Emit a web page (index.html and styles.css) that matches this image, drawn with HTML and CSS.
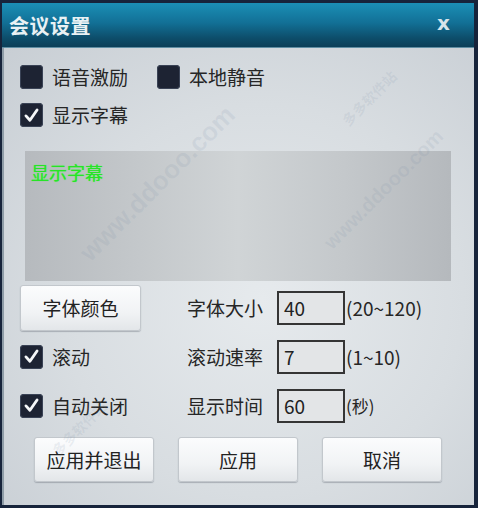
FILE: index.html
```html
<!DOCTYPE html>
<html lang="zh-CN">
<head>
    <meta charset="UTF-8">
    <title>会议设置</title>
    <link rel="stylesheet" href="styles.css">
</head>
<body>
    <div class="window">
        <div class="titlebar">
            <span class="title">会议设置</span>
            <span class="close">x</span>
        </div>

        <div class="content">
            <div class="checks">
                <label class="check"><span class="box"></span>语音激励</label>
                <label class="check"><span class="box"></span>本地静音</label>
            </div>
            <div class="checks">
                <label class="check"><span class="box on"><svg viewBox="0 0 24 24"><path d="M5 12.5 L10 18 L19 5" /></svg></span>显示字幕</label>
            </div>

            <div class="preview">
                <span class="preview-text">显示字幕</span>
            </div>

            <div class="grid">
                <div class="cell-first"><button class="btn btn-color">字体颜色</button></div>
                <span class="label">字体大小</span>
                <div class="input">40</div>
                <span class="hint">(20~120)</span>

                <div class="cell-first"><label class="check"><span class="box on"><svg viewBox="0 0 24 24"><path d="M5 12.5 L10 18 L19 5" /></svg></span>滚动</label></div>
                <span class="label">滚动速率</span>
                <div class="input">7</div>
                <span class="hint">(1~10)</span>

                <div class="cell-first"><label class="check"><span class="box on"><svg viewBox="0 0 24 24"><path d="M5 12.5 L10 18 L19 5" /></svg></span>自动关闭</label></div>
                <span class="label">显示时间</span>
                <div class="input">60</div>
                <span class="hint small">(秒)</span>
            </div>

            <div class="actions">
                <button class="btn">应用并退出</button>
                <button class="btn">应用</button>
                <button class="btn">取消</button>
            </div>

            <!-- site watermarks -->
            <span class="mark m1">www.ddooo.com</span>
            <span class="mark m2">www.ddooo.com</span>
            <span class="mark cn m3">多多软件站</span>
            <span class="mark cn m4">多多软件站</span>
        </div>
    </div>
</body>
</html>
```

FILE: styles.css
```css
body {
    margin: 0;
    background: #1a2942;
    font-family: "Noto Sans CJK SC", "Microsoft YaHei", sans-serif;
    color: #232323;
}

.window {
    width: 478px;
    height: 508px;
    box-sizing: border-box;
    padding: 3px 4px 3px 2px;
    background: #17243b;
    display: flex;
    flex-direction: column;
}

.titlebar {
    height: 44px;
    flex-shrink: 0;
    display: flex;
    align-items: center;
    justify-content: space-between;
    padding: 0 24px 0 7px;
    background: linear-gradient(to bottom, #1b8fb6 0%, #127096 45%, #0d4d6a 80%, #0c3f58 100%);
    border-bottom: 1px solid #5f8ea3;
}

.title {
    color: #e9f1f4;
    font-size: 20px;
    font-weight: bold;
    letter-spacing: 0.5px;
}

.close {
    color: #d7e4ea;
    font-family: "DejaVu Sans", sans-serif;
    font-size: 20px;
    font-weight: bold;
    line-height: 1;
    margin-top: -4px;
}

.content {
    position: relative;
    overflow: hidden;
    flex: 1;
    border-left: 2px solid #8e9ca7;
    background: radial-gradient(ellipse at 55% 55%, #e6eaed 0%, #d8dde1 55%, #c8ced4 100%);
    padding: 17px 0 0 16px;
}

.checks {
    display: flex;
    gap: 29px;
    margin-bottom: 14px;
}

.check {
    display: flex;
    align-items: center;
    gap: 9px;
    font-size: 19px;
    line-height: 24px;
    color: #262626;
}

.box {
    width: 23px;
    height: 24px;
    border-radius: 4px;
    background: #1d2333;
    box-shadow: inset 0 0 0 1px #3a4356;
    display: flex;
    align-items: center;
    justify-content: center;
}

.box svg {
    width: 19px;
    height: 19px;
}

.box svg path {
    fill: none;
    stroke: #f4f6f8;
    stroke-width: 3.6;
    stroke-linecap: round;
    stroke-linejoin: round;
}

.preview {
    width: 426px;
    height: 130px;
    margin: 24px 0 2px 5px;
    box-sizing: border-box;
    padding: 10px 0 0 6px;
    background: linear-gradient(to right, #b6babe 0%, #c3c7ca 25%, #d0d4d6 50%, #c4c8cb 75%, #b5b9bd 100%);
}

.preview-text {
    color: #27e327;
    font-size: 18px;
    line-height: 22px;
    text-shadow: 0 0 1px #40ff40;
}

.grid {
    display: grid;
    grid-template-columns: 167px 90px 70px auto;
    grid-auto-rows: 49px;
    align-items: center;
}

.cell-first {
    display: flex;
    align-items: center;
}

.label {
    font-size: 19px;
    color: #262626;
}

.input {
    width: 68px;
    height: 34px;
    box-sizing: border-box;
    border: 2px solid #353535;
    background: #e3e5e7;
    font-size: 19px;
    line-height: 30px;
    padding-left: 5px;
    color: #222;
}

.hint {
    font-size: 19px;
    color: #262626;
    margin-left: -1px;
}

.hint.small {
    font-size: 17px;
}

.btn {
    font-family: inherit;
    font-size: 19px;
    color: #222;
    height: 46px;
    width: 121px;
    border: 1px solid #c2c7cc;
    border-radius: 3px;
    background: linear-gradient(to bottom, #fbfcfd 0%, #f1f3f5 60%, #e3e6e9 100%);
    box-shadow: 0 1px 1px rgba(80, 90, 100, 0.35);
    padding: 0;
}

.actions {
    display: flex;
    gap: 24px;
    margin: 7px 0 0 14px;
}

.actions .btn {
    width: 120px;
    height: 45px;
}

.mark {
    position: absolute;
    font-family: "Liberation Sans", sans-serif;
    font-size: 26px;
    font-weight: bold;
    color: rgba(120, 140, 165, 0.13);
    transform: rotate(-45deg);
    white-space: nowrap;
    pointer-events: none;
}

.mark.cn {
    font-family: "Noto Sans CJK SC", sans-serif;
    font-size: 14px;
}

.m1 { left: 50px; top: 120px; }
.m2 { left: 300px; top: 130px; font-size: 20px; }
.m3 { left: 330px; top: 40px; }
.m4 { left: 40px; top: 370px; }
```
